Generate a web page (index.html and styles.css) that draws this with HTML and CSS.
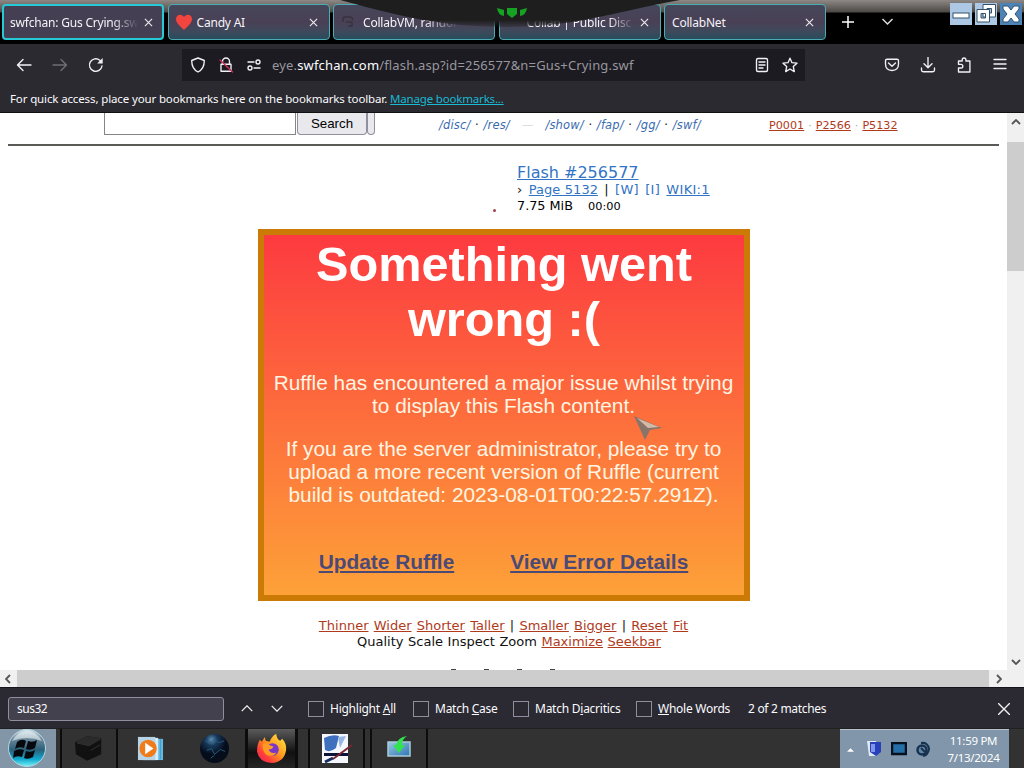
FILE: index.html
```html
<!DOCTYPE html>
<html lang="en">
<head>
  <meta charset="UTF-8" />
  <title>swfchan: Gus Crying.swf</title>
  <meta name="viewport" content="width=device-width, initial-scale=1" />
  <link rel="stylesheet" href="styles.css">
</head>
<body>
  <div class="screen">
    <header class="tabstrip">
      <div class="tab active"><span class="tab-title fade">swfchan: Gus Crying.swf</span><svg class="x" viewBox="0 0 10 10"><path d="M1 1l8 8M9 1l-8 8"/></svg></div>
      <div class="tab">
        <svg class="heart" viewBox="0 0 16 16"><path d="M8 16C4 12 0 9 0 5C0 1 5-1 8 3C11-1 16 1 16 5C16 9 12 12 8 16z"/></svg>
        <span class="tab-title">Candy AI</span><svg class="x" viewBox="0 0 10 10"><path d="M1 1l8 8M9 1l-8 8"/></svg>
      </div>
      <div class="tab">
        <svg class="cvm" viewBox="0 0 16 16"><path d="M2 8V5q0-2 2-2h5q2 0 3 3M5 8h6v4H7"/></svg>
        <span class="tab-title fade-long">CollabVM, random</span>
      </div>
      <div class="tab"><span class="tab-title indent fade">Collab | Public Disc</span><svg class="x" viewBox="0 0 10 10"><path d="M1 1l8 8M9 1l-8 8"/></svg></div>
      <div class="tab"><span class="tab-title">CollabNet</span><svg class="x" viewBox="0 0 10 10"><path d="M1 1l8 8M9 1l-8 8"/></svg></div>
      <svg class="plus" viewBox="0 0 12 12"><path d="M6 0v12M0 6h12"/></svg>
      <svg class="chev" viewBox="0 0 12 8"><path d="M1 1l5 5 5-5"/></svg>
      <div class="winbtns">
        <svg viewBox="0 0 22 22"><rect class="wb" width="22" height="22"/><rect class="wi" x="3" y="10" width="16" height="5"/></svg>
        <svg viewBox="0 0 22 22"><rect class="wb" width="22" height="22"/><path class="wi" fill-rule="evenodd" d="M8 1.500h12.500v12.500H8zM12 5.500v4.500h4.500V5.500z"/><path class="wi" fill-rule="evenodd" d="M2 6.500h12.500V19H2zM6 10.500V15h4.500v-4.500z"/></svg>
        <svg viewBox="0 0 22 22"><rect class="wb close" width="22" height="22"/><path class="wi" d="M3 3h5l3 4 3-4h5v3l-4 5 4 5v3h-5l-3-4-3 4H3v-3l4-5-4-5z"/></svg>
      </div>
      <svg class="notch" viewBox="0 0 340 28">
        <defs><linearGradient id="fadeout" x1="0" y1="0" x2="0" y2="1"><stop offset=".75" stop-color="#1e1e1e"/><stop offset="1" stop-color="#1e1e1e" stop-opacity=".3"/></linearGradient></defs>
        <path fill="url(#fadeout)" d="M0 0C45 12 95 27 165 27S265 14 340 0z"/>
        <path class="green" d="M157 8l7 2v6q-6-1-7-8zM187 8l-7 2v6q6-1 7-8zM167 8h10v6l-5 4-5-4z"/>
      </svg>
    </header>

    <div class="navbar">
      <svg class="ic back" viewBox="0 0 16 16"><path d="M15 8H1.500M7 2.500L1.500 8 7 13.500"/></svg>
      <svg class="ic fwd" viewBox="0 0 16 16"><path d="M1 8h13.500M9 2.500L14.500 8 9 13.500"/></svg>
      <svg class="ic reload" viewBox="0 0 16 16"><path d="M14 9A6.300 6.300 0 1 1 11.800 3.200L13 4.500"/><path class="solid" d="M14.700 1v5.500H9.200z"/></svg>
      <div class="urlbar">
        <svg class="ic" viewBox="0 0 16 16"><path d="M8 1L14.300 3.500C14.300 9 12 13 8 15C4 13 1.700 9 1.700 3.500z"/></svg>
        <svg class="ic lock" viewBox="0 0 16 16"><path d="M4.500 7V4.500a3.500 3.500 0 0 1 7 0V7M3 7.200h10v7H3z"/><path class="red" d="M2 3l12.500 12"/></svg>
        <svg class="ic perms" viewBox="0 0 16 16"><path d="M8 5H2M8 11h6"/><circle cx="12" cy="5" r="2"/><circle cx="4" cy="11" r="2"/></svg>
        <span class="url">eye.<b>swfchan.com</b>/flash.asp?id=256577&amp;n=Gus+Crying.swf</span>
        <svg class="ic reader" viewBox="0 0 16 16"><rect x="2.500" y="1.500" width="11" height="13" rx="1.500"/><path d="M5 5h6M5 8h6M5 11h4"/></svg>
        <svg class="ic star" viewBox="0 0 16 16"><path d="M8 1.200l2 4.500 5 .5-3.700 3.400 1 5L8 12l-4.300 2.600 1-5L1 6.200l5-.5z"/></svg>
      </div>
      <div class="tools">
        <svg class="ic" viewBox="0 0 16 16"><path d="M3 2.200h10q1.500 0 1.500 1.500V7q0 6.500-6.500 6.500T1.500 7V3.700Q1.500 2.200 3 2.200zM4.500 6L8 9.300 11.500 6"/></svg>
        <svg class="ic" viewBox="0 0 16 16"><path d="M8 0v10.500M4 6.800l4 4 4-4M1.500 11v2q0 1.700 1.700 1.700h9.600q1.700 0 1.700-1.700v-2"/></svg>
        <svg class="ic" viewBox="0 0 16 16"><path d="M2.500 15v-4H5a1.800 1.800 0 0 0 0-3.700H2.500V4h3.700V2.800a1.800 1.800 0 0 1 3.700 0V4h4V15z"/></svg>
        <svg class="ic" viewBox="0 0 16 16"><path d="M2 2.500h12M2 7h12M2 11.500h12"/></svg>
      </div>
    </div>

    <div class="bookmarks"><span class="bm-text">For quick access, place your bookmarks here on the bookmarks toolbar.</span><a class="bm-link">Manage bookmarks...</a></div>

    <div class="viewport">
      <main class="page">
        <div class="topline">
          <div class="search-input"></div>
          <div class="search-btn">Search</div>
          <div class="sliver"></div>
          <div class="boards"><a>/disc/</a> · <a>/res/</a><span class="dash">—</span><a>/show/</a> · <a>/fap/</a> · <a>/gg/</a> · <a>/swf/</a></div>
          <div class="pages"><a>P0001</a> · <a>P2566</a> · <a>P5132</a></div>
        </div>
        <div class="info">
          <div class="dot"></div>
          <div>
            <div class="flash-title"><a>Flash #256577</a></div>
            <div class="info-row">› <a class="tight">Page 5132</a> | <span class="blue">[W] [I]</span> <a>WIKI:1</a></div>
            <div class="info-row size">7.75 MiB <span class="time">00:00</span></div>
          </div>
        </div>
        <section class="ruffle">
          <h1>Something went<br>wrong :(</h1>
          <p>Ruffle has encountered a major issue whilst trying<br>to display this Flash content.</p>
          <p>If you are the server administrator, please try to<br>upload a more recent version of Ruffle (current<br>build is outdated: 2023-08-01T00:22:57.291Z).</p>
          <div class="ruffle-links"><a>Update Ruffle</a><a>View Error Details</a></div>
          <svg class="cursor" viewBox="0 0 28 24"><path class="c1" d="M0 0L28 12L16 14L11 24z"/><path class="c2" d="M3 2L25 11L14 12z"/></svg>
        </section>
        <div class="controls">
          <div class="c-row"><a>Thinner</a> <a>Wider</a> <a>Shorter</a> <a>Taller</a> | <a>Smaller</a> <a>Bigger</a> | <a>Reset</a> <a>Fit</a></div>
          <div class="c-row second">Quality Scale Inspect Zoom <a>Maximize</a> <a>Seekbar</a></div>
        </div>
        <div class="cut"><i></i><i></i><i></i><i></i></div>
      </main>
      <div class="vscroll">
        <svg viewBox="0 0 10 6"><path d="M1 5l4-4 4 4"/></svg>
        <div class="vthumb"></div>
        <svg class="down" viewBox="0 0 10 6"><path d="M1 1l4 4 4-4"/></svg>
      </div>
    </div>
    <div class="hscroll">
      <svg viewBox="0 0 6 10"><path d="M5 1L1 5l4 4"/></svg>
      <div class="hthumb"></div>
      <svg class="right" viewBox="0 0 6 10"><path d="M1 1l4 4-4 4"/></svg>
    </div>

    <div class="findbar">
      <div class="find-input">sus32</div>
      <svg class="arrow up" viewBox="0 0 12 8"><path d="M0 7l6-6 6 6"/></svg>
      <svg class="arrow" viewBox="0 0 12 8"><path d="M0 1l6 6 6-6"/></svg>
      <div class="check c-all"><i></i><span>Highlight <u>A</u>ll</span></div>
      <div class="check c-case"><i></i><span>Match <u>C</u>ase</span></div>
      <div class="check c-dia"><i></i><span>Match D<u>i</u>acritics</span></div>
      <div class="check c-words"><i></i><span><u>W</u>hole Words</span></div>
      <span class="matches">2 of 2 matches</span>
      <svg class="find-x" viewBox="0 0 12 12"><path d="M0 0l12 12M12 0L0 12"/></svg>
    </div>

    <footer class="taskbar">
      <div class="start">
        <svg viewBox="0 0 40 38">
          <defs>
            <linearGradient id="orb" x1="0" y1="0" x2="0" y2="1"><stop offset="0" stop-color="#dce9ef"/><stop offset=".25" stop-color="#6c8799"/><stop offset=".55" stop-color="#2b6079"/><stop offset=".8" stop-color="#10a8cf"/><stop offset="1" stop-color="#7af2f4"/></linearGradient>
          </defs>
          <circle cx="20" cy="19" r="18.500" fill="url(#orb)" stroke="#b3d5e2"/>
          <path fill="#05090d" d="M10 13q5-4 9-1l-2 7q-5-2-9 1zM21 12q5 2 9-1l-2 8q-5 3-9 1zM7 22q5-3 10-1l-2 7q-5-2-9 1zM19 22q5 2 9-1l-2 7q-5 3-9 1z"/>
          <path fill="#e9f4f7" opacity=".6" d="M5 12Q11 2 20 2T35 12Q20 6 5 12z"/>
        </svg>
      </div>
      <div class="task cube"><svg viewBox="0 0 32 30"><path fill="#111" d="M1 8L14 2l15 2v17L14 28 2 21z"/><path fill="#2b2b2b" d="M1 8l13-6 15 2-13 8z"/><path stroke="#333" fill="none" d="M3 9l13 3 12-7M18 17l10-6"/></svg></div>
      <div class="task media"><svg viewBox="0 0 28 28"><path fill="#69b8e3" d="M8 4h19v22H8z"/><path fill="#d6edfa" d="M5 3h17v23H5z"/><path stroke="#3d9dcc" d="M24.500 4v21"/><rect x="1" y="2" width="18" height="24" fill="#b7d4e6"/><circle cx="11.500" cy="14" r="9" fill="#ef7b1a"/><path fill="#fff" d="M8.500 8L17 14l-8.500 6z"/></svg></div>
      <div class="task globe"><svg viewBox="0 0 32 32"><defs><radialGradient id="glb" cx=".4" cy=".2"><stop offset="0" stop-color="#5f91b5"/><stop offset=".4" stop-color="#183a5c"/><stop offset="1" stop-color="#050d1b"/></radialGradient></defs><circle cx="16" cy="16" r="15" fill="url(#glb)"/><path stroke="#2a587c" fill="none" d="M6 8l5 3 4-4 6 3 5-2M8 18l5-2 3 6 6-5 5 2M12 26l4-3"/></svg></div>
      <div class="task fox"><svg viewBox="0 0 32 32">
        <defs><linearGradient id="fx" x1="1" y1="0" x2="0" y2="1"><stop offset="0" stop-color="#fff04a"/><stop offset=".45" stop-color="#ff9a1c"/><stop offset=".75" stop-color="#ff3b3b"/><stop offset="1" stop-color="#e0216a"/></linearGradient></defs>
        <path fill="url(#fx)" d="M4 7l2 2 3-5 1 4 4 1q3-7 7-8 0 5 4 7l2-2q5 5 4 12-2 12-15 13Q3 30 1 19 1 12 4 7z"/>
        <circle cx="17" cy="17" r="6.500" fill="#7a36c9"/><path fill="#ff9b22" d="M7 11q5-1 8 2l3 1q-1 3-5 3 2 5 8 3-3 5-9 3-6-3-5-12z"/></svg></div>
      <div class="task paint"><svg viewBox="0 0 32 32"><rect x="1" y="1" width="26" height="29" fill="#f4f7fb"/><path fill="#3f70bd" d="M3 5q8-4 15-2l-3 12q-6 5-11 2z"/><path fill="#98b7e5" d="M17 4l8-1-6 12z"/><path fill="#0b1438" d="M3 20h24v3H3z"/><path stroke="#7b2531" stroke-width="2" d="M12 26L31 12"/><path stroke="#192c60" stroke-width="3" d="M4 29l8-4"/></svg></div>
      <div class="task monitor"><svg viewBox="0 0 28 26"><defs><linearGradient id="mon" x1="0" y1="0" x2="1" y2="1"><stop offset="0" stop-color="#9bc9e0"/><stop offset="1" stop-color="#2c74b4"/></linearGradient></defs><rect x="3" y="8" width="22" height="14" fill="url(#mon)" stroke="#a9cbd9" stroke-width="1.500"/><path fill="#31e44d" d="M11 11Q13 3 22 2q-5 3-5 9h3l-6 8-6-8z"/></svg></div>
      <div class="tray">
        <svg class="tri" viewBox="0 0 8 5"><path fill="#fff" d="M0 5l4-4 4 4z"/></svg>
        <svg class="t1" viewBox="0 0 16 18"><path fill="#dfe9f5" d="M1 1h9v15H3z"/><path fill="#2840b8" d="M4 2h11v10l-5 4-6-4z"/><path fill="#8196eb" d="M5 4h4v8H5z"/></svg>
        <svg class="t2" viewBox="0 0 16 14"><rect x="1" y="1" width="14" height="11" fill="#256fa9" stroke="#07101e" stroke-width="2.500"/></svg>
        <svg class="t3" viewBox="0 0 16 16"><circle cx="7" cy="9" r="4.500" fill="#6387a5" stroke="#163250" stroke-width="2.500"/><path fill="none" stroke="#17324e" stroke-width="2" d="M6 2q7-1 8 6-1 6-6 7M6 7l4 4"/></svg>
        <div class="clock">11:59 PM<br>7/13/2024</div>
      </div>
    </footer>
  </div>
</body>
</html>
```
FILE: styles.css
```css
* {
  box-sizing: border-box;
}
body {
  margin: 0;
  font-family: "Noto Sans", "Open Sans", sans-serif;
  font-size: 12px;
  overflow: hidden;
}
svg {
  display: block;
  flex: none;
  fill: none;
}
.screen {
  width: 1024px;
  height: 768px;
  display: flex;
  flex-direction: column;
  white-space: nowrap;
}

/* tabs */
.tabstrip {
  position: relative;
  height: 44px;
  flex: none;
  display: flex;
  align-items: flex-start;
  gap: 3.500px;
  padding: 4px 2px 0;
  background: linear-gradient(#8e8885 0, #77736f 4px, #4b4946 12px, #000 13px);
}
.tab {
  width: 162px;
  height: 36px;
  flex: none;
  display: flex;
  align-items: center;
  padding: 0 11px 0 7px;
  border: 1px solid #4dabb5;
  border-radius: 4px;
  background: linear-gradient(#45475a, #4a4056 50%, #40495b 75%, #284d5c);
  color: #f4f4f8;
  letter-spacing: -0.2px;
}
.tab.active {
  border: 2px solid #27c9d6;
  background: #443f52;
  padding: 0 9px 0 6px;
}
.tab-title {
  flex: 1;
  overflow: hidden;
}
.fade {
  -webkit-mask-image: linear-gradient(to right, #000 78%, transparent 98%);
  mask-image: linear-gradient(to right, #000 78%, transparent 98%);
}
.fade-long {
  -webkit-mask-image: linear-gradient(to right, #000 50%, transparent 80%);
  mask-image: linear-gradient(to right, #000 50%, transparent 80%);
}
.indent {
  padding-left: 20px;
}
.x {
  width: 9px;
  height: 9px;
  margin-left: 3px;
  stroke: #eee;
  stroke-width: 1.200;
}
.heart {
  width: 16px;
  height: 16px;
  margin-right: 5px;
  fill: #f2453f;
}
.cvm {
  width: 16px;
  height: 16px;
  margin-right: 6px;
  stroke: #37323f;
  stroke-width: 1.500;
}
.plus {
  width: 12px;
  height: 12px;
  margin: 12px 0 0 12px;
  stroke: #fff;
  stroke-width: 1.500;
}
.chev {
  width: 13px;
  height: 8px;
  margin: 14px 0 0 24px;
  stroke: #ddd;
  stroke-width: 1.500;
}
.winbtns {
  display: flex;
  gap: 3px;
  margin: -1px 0 0 auto;
}
.winbtns svg {
  width: 22px;
  height: 22px;
}
.wb {
  fill: #adc8e4;
}
.wb.close {
  fill: #4d84b7;
}
.wi {
  fill: #fff;
  stroke: #33506b;
  stroke-width: 1;
}
.notch {
  position: absolute;
  left: 340px;
  top: 0;
  width: 340px;
  height: 28px;
}
.green {
  fill: #16a222;
}

/* navigation */
.navbar {
  height: 41px;
  flex: none;
  display: flex;
  align-items: center;
  background: #2b2a31;
}
.ic {
  width: 16px;
  height: 16px;
  stroke: #f2f2f5;
  stroke-width: 1.350;
  stroke-linejoin: round;
  stroke-linecap: round;
}
.back {
  margin-left: 16px;
}
.fwd {
  margin-left: 20px;
  stroke: #6f6e75;
}
.reload {
  margin-left: 20px;
}
.solid {
  fill: #f2f2f5;
  stroke: none;
}
.urlbar {
  width: 623px;
  height: 32px;
  margin-left: 78px;
  display: flex;
  align-items: center;
  padding: 0 7px 0 8px;
  background: #1c1b22;
}
.lock,
.perms {
  margin-left: 12px;
}
.red {
  stroke: #d3315c;
}
.url {
  flex: 1;
  margin-left: 10px;
  color: #98979d;
  font-size: 13px;
  letter-spacing: 0.16px;
}
.url b {
  font-weight: normal;
  color: #fbfbfe;
}
.star {
  margin-left: 12px;
}
.tools {
  margin-left: 79px;
  display: flex;
  gap: 20px;
}
.bookmarks {
  height: 28px;
  flex: none;
  display: flex;
  align-items: center;
  padding-left: 10px;
  background: #2b2a31;
  border-bottom: 1px solid #111;
  color: #fbfbfe;
  font-size: 11.500px;
  letter-spacing: -0.130px;
}
.bm-link {
  margin-left: 3px;
  color: #18b9d2;
  letter-spacing: -0.180px;
  text-decoration: underline;
}

/* page */
.viewport {
  height: 557px;
  flex: none;
  display: flex;
  background: #fff;
}
.page {
  width: 1007px;
  height: 557px;
  overflow: hidden;
  color: #111;
  font: 13px/16px "DejaVu Sans", sans-serif;
}
.page a {
  text-decoration: underline;
}
.topline {
  height: 33px;
  margin: 0 8px;
  padding-left: 96px;
  display: flex;
  border-bottom: 2px solid #5a5a56;
}
.search-input {
  width: 192px;
  height: 22px;
  border: 1px solid #858585;
  border-top: 0;
}
.search-btn {
  width: 70px;
  height: 22px;
  margin-left: 1px;
  border: 1px solid #8f8f9d;
  border-top: 0;
  border-radius: 0 0 4px 4px;
  background: #e9e9ed;
  color: #000;
  font: 13.300px/21px "Liberation Sans", sans-serif;
  text-align: center;
}
.sliver {
  width: 8px;
  height: 22px;
  border: 1px solid #8f8f9d;
  border-top: 0;
  border-radius: 0 0 4px 4px;
  background: #e9e9ed;
}
.boards {
  width: 330px;
  margin: 4px 0 0 64px;
  font-size: 11.500px;
  letter-spacing: 0.15px;
  word-spacing: 0.8px;
}
.boards a {
  color: #3a6bb0;
  font-style: italic;
  text-decoration: none;
}
.dash {
  margin: 0 12px;
  color: #ddd;
}
.pages {
  margin-top: 5px;
  color: #aaa;
  font-size: 11.200px;
  word-spacing: 0.4px;
}
.pages a,
.controls a {
  color: #b03a1c;
}
.info {
  display: flex;
  padding: 17px 0 0 493px;
  line-height: 16px;
}
.info a,
.blue {
  color: #3274c4;
}
.dot {
  width: 3px;
  height: 3px;
  margin: 46px 21px 0 0;
  border-radius: 2px;
  background: #a04050;
}
.flash-title {
  height: 19px;
  font-size: 16px;
  line-height: 19px;
}
.info-row {
  height: 16px;
  font-size: 13px;
  letter-spacing: 0.3px;
  word-spacing: 1.8px;
}
.tight {
  letter-spacing: 0;
  word-spacing: 0.5px;
}
.info-row.size {
  color: #000;
  font-size: 12.800px;
  letter-spacing: 0;
  word-spacing: 0;
}
.time {
  margin-left: 11px;
  font-size: 11.300px;
}

/* ruffle panic screen */
.ruffle {
  position: relative;
  width: 492px;
  height: 372px;
  margin: 15px 0 0 258px;
  border: 6px solid #cb7a05;
  background: linear-gradient(#fd3a40, #fda138);
  color: #fff5e2;
  font: 20.850px/23px "Liberation Sans", sans-serif;
  text-align: center;
}
.ruffle h1 {
  margin: 2px 0 0;
  color: #fff;
  font-size: 48.700px;
  line-height: 55px;
}
.ruffle p {
  margin: 0 1px 20px 0;
}
.ruffle h1 + p {
  margin-top: 24px;
}
.ruffle-links {
  display: flex;
  justify-content: center;
  gap: 56px;
  margin: 44px 1px 0 0;
  color: #4b4a77;
  font-weight: bold;
}
.cursor {
  position: absolute;
  left: 370px;
  top: 181px;
  width: 28px;
  height: 24px;
}
.c1 {
  fill: #89746a;
}
.c2 {
  fill: #d3b9a7;
}
.controls {
  padding-top: 17px;
  text-align: center;
  font-size: 13px;
}
.c-row {
  word-spacing: 1.1px;
}
.c-row.second {
  padding-left: 11px;
  word-spacing: 0.4px;
}
.cut {
  display: flex;
  gap: 28px;
  margin: 19px 0 0 451px;
}
.cut i {
  width: 5px;
  height: 2px;
  background: #444;
}

/* scrollbars */
.vscroll {
  width: 17px;
  height: 557px;
  display: flex;
  flex-direction: column;
  align-items: center;
  padding: 6px 0 5px;
  background: #f0f0f0;
}
.vscroll svg,
.hscroll svg {
  stroke: #555;
  stroke-width: 1.800;
}
.vscroll svg {
  width: 10px;
  height: 6px;
}
.vthumb {
  width: 17px;
  height: 129px;
  margin-top: 17px;
  background: #cdcdcd;
}
.vscroll .down {
  margin-top: auto;
}
.hscroll {
  height: 17px;
  flex: none;
  display: flex;
  align-items: center;
  padding: 0 5px;
  background: #f0f0f0;
}
.hscroll svg {
  width: 6px;
  height: 10px;
}
.hthumb {
  width: 972px;
  height: 17px;
  margin-left: 6px;
  background: #cdcdcd;
}
.hscroll .right {
  margin-left: 7px;
}

/* find bar */
.findbar {
  height: 41px;
  flex: none;
  display: flex;
  align-items: center;
  padding: 1px 14px 0 8px;
  background: #2b2a33;
  border-top: 1px solid #15141a;
  color: #fbfbfe;
}
.find-input {
  width: 216px;
  height: 24px;
  padding-left: 8px;
  border: 1px solid #8f8f9d;
  border-radius: 3px;
  background: #42414d;
  line-height: 22px;
  letter-spacing: -0.5px;
}
.arrow {
  width: 12px;
  height: 7px;
  margin-left: 18px;
  stroke: #eee;
  stroke-width: 1.500;
}
.arrow.up {
  margin-left: 17px;
}
.check {
  display: flex;
  align-items: center;
  gap: 6px;
  letter-spacing: -0.25px;
}
.check i {
  width: 16px;
  height: 16px;
  border: 1px solid #8f8f9d;
}
.c-all {
  width: 105px;
  margin-left: 25px;
}
.c-case {
  width: 100px;
}
.c-dia {
  width: 123px;
}
.c-words {
  width: 112px;
}
.matches {
  letter-spacing: -0.3px;
}
.find-x {
  width: 12px;
  height: 12px;
  margin-left: auto;
  stroke: #eee;
  stroke-width: 1.400;
}

/* taskbar */
.taskbar {
  height: 40px;
  display: flex;
  align-items: stretch;
  background: #323232;
  border-top: 1px solid #202020;
}
.start {
  width: 56px;
  padding-left: 7px;
  background: #8296a7;
}
.start svg {
  width: 40px;
  height: 38px;
}
.task {
  display: flex;
  align-items: center;
  justify-content: center;
}
.cube {
  width: 58px;
  margin-left: 4px;
  border: solid #0c0c0c;
  border-width: 0 2px;
}
.cube svg {
  width: 30px;
  height: 29px;
}
.media {
  width: 65px;
}
.media svg {
  width: 27px;
  height: 27px;
}
.globe {
  width: 62px;
}
.globe svg {
  width: 31px;
  height: 31px;
}
.fox {
  width: 53px;
  border: solid #0c0c0c;
  border-width: 0 3px;
  background: linear-gradient(#5b5b5b, #111 60%, #252525);
}
.fox svg {
  width: 31px;
  height: 31px;
}
.paint {
  width: 57px;
  margin-left: 10px;
  border: solid #0c0c0c;
  border-width: 0 2px;
}
.paint svg {
  width: 32px;
  height: 32px;
}
.monitor {
  width: 58px;
  margin-left: 5px;
  border: solid #0c0c0c;
  border-width: 0 2px;
}
.monitor svg {
  width: 28px;
  height: 26px;
  margin-bottom: 4px;
}
.tray {
  width: 169px;
  margin: 0 15px 0 auto;
  display: flex;
  align-items: center;
  padding-left: 7px;
  background: #8196aa;
  border-top: 1px solid #b5c2ce;
  color: #fff;
}
.tri {
  width: 7px;
  height: 5px;
}
.t1 {
  width: 16px;
  height: 18px;
  margin-left: 12px;
}
.t2 {
  width: 16px;
  height: 14px;
  margin-left: 9px;
}
.t3 {
  width: 16px;
  height: 16px;
  margin-left: 8px;
}
.clock {
  flex: 1;
  padding-left: 7px;
  line-height: 17px;
  font-size: 11.500px;
  letter-spacing: -0.3px;
  text-align: center;
}
```
